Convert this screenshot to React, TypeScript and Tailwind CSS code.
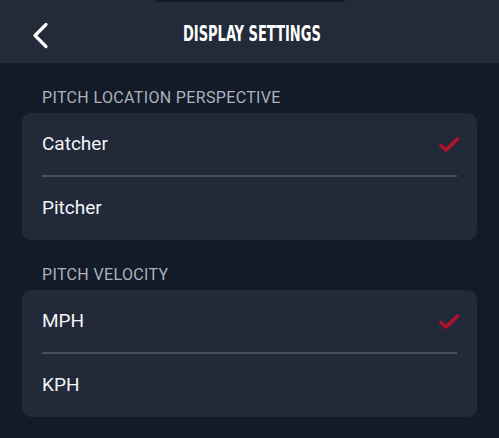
import React from 'react';

interface Option {
  label: string;
  selected: boolean;
}

interface Section {
  title: string;
  options: Option[];
}

const sections: Section[] = [
  {
    title: 'PITCH LOCATION PERSPECTIVE',
    options: [
      { label: 'Catcher', selected: true },
      { label: 'Pitcher', selected: false },
    ],
  },
  {
    title: 'PITCH VELOCITY',
    options: [
      { label: 'MPH', selected: true },
      { label: 'KPH', selected: false },
    ],
  },
];

function Check() {
  return (
    <svg className="w-[22px] h-[18px] mr-[-3px]" viewBox="0 0 22 18" fill="none">
      <path d="M3 10.5l5 4.5L19.5 4" stroke="#b3122b" strokeWidth={3.6} strokeLinecap="round" strokeLinejoin="round" />
    </svg>
  );
}

export default function App() {
  return (
    <div className="w-[499px] h-[438px] bg-[#131a28] overflow-hidden font-['Roboto',sans-serif]">
      <div className="relative h-[63px] bg-[#232a39] flex items-center justify-center">
        <div className="absolute top-0 left-[155px] w-[190px] h-[2px] bg-[#161c27]" />
        <button type="button" className="absolute left-[31px] top-[22px] text-white">
          <svg className="w-[20px] h-[27px]" viewBox="0 0 20 27" fill="none">
            <path d="M15 2.5L4 13.5l11 11" stroke="currentColor" strokeWidth={3.2} strokeLinecap="round" strokeLinejoin="round" />
          </svg>
        </button>
        <h1 className="text-white text-[21px] font-bold font-['DejaVu_Sans_Condensed','DejaVu_Sans',sans-serif] scale-x-[0.69] mt-[6px] ml-[5px]">
          DISPLAY SETTINGS
        </h1>
      </div>

      <div className="px-[22px]">
        {sections.map((section) => (
          <div key={section.title} className="pt-[26px]">
            <div className="pl-[20px] text-[16px] leading-[18px] text-[#adb2ba] tracking-[0.35px]">
              {section.title}
            </div>
            <div className="mt-[6px] bg-[#222938] rounded-[9px] h-[127px] flex flex-col">
              {section.options.map((opt, j) => (
                <div key={opt.label} className="flex-1 flex flex-col px-[20px]">
                  <div className="flex-1 flex items-center justify-between">
                    <span className="text-[19px] text-[#f2f4f6]">{opt.label}</span>
                    {opt.selected && <Check />}
                  </div>
                  {j === 0 && <div className="h-[2px] bg-[#474e5c]" />}
                </div>
              ))}
            </div>
          </div>
        ))}
      </div>
    </div>
  );
}
